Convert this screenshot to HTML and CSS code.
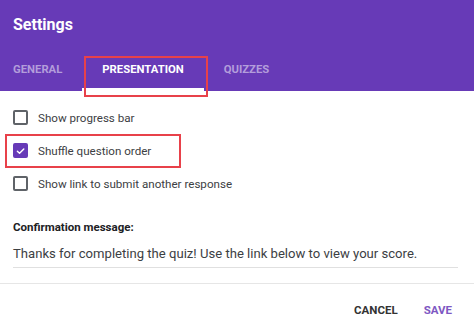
FILE: index.html
```html
<!DOCTYPE html>
<html>
<head>
<meta charset="utf-8">
<link rel="stylesheet" href="styles.css">
</head>
<body>
<div class="dialog">
  <header class="header">
    <h1 class="title">Settings</h1>
    <nav class="tabs">
      <div class="tab">GENERAL</div>
      <div class="tab active">PRESENTATION</div>
      <div class="tab">QUIZZES</div>
    </nav>
    <div class="mark mark-tab"></div>
  </header>
  <section class="options">
    <label class="option"><span class="box"></span><span>Show progress bar</span></label>
    <label class="option"><span class="box checked"><svg viewBox="0 0 14 14" width="14" height="14"><path d="M3 7.2 L5.8 10 L11.2 4.4" fill="none" stroke="#fff" stroke-width="1.8" stroke-linecap="round" stroke-linejoin="round"/></svg></span><span>Shuffle question order</span><span class="mark mark-opt"></span></label>
    <label class="option"><span class="box"></span><span>Show link to submit another response</span></label>
  </section>
  <section class="confirm">
    <div class="confirm-label">Confirmation message:</div>
    <div class="confirm-input">Thanks for completing the quiz! Use the link below to view your score.</div>
  </section>
  <footer class="actions">
    <button class="btn">CANCEL</button>
    <button class="btn primary">SAVE</button>
  </footer>
</div>
</body>
</html>
```

FILE: styles.css
```css
html, body {
  margin: 0;
  padding: 0;
  background: #fff;
}
body {
  font-family: Roboto, "Liberation Sans", sans-serif;
  color: #202124;
  width: 474px;
  height: 335px;
  overflow: hidden;
}
.dialog {
  display: flex;
  flex-direction: column;
}
.header {
  position: relative;
  background: #673ab7;
  height: 91px;
  display: flex;
  flex-direction: column;
  justify-content: space-between;
}
.title {
  margin: 0;
  padding: 15px 0 0 13px;
  font-size: 16px;
  font-weight: 700;
  color: #fff;
  line-height: 20px;
}
.tabs {
  display: flex;
  margin-left: -7px;
}
.tab {
  padding: 0 20px;
  height: 40px;
  line-height: 38px;
  font-size: 11.3px;
  font-weight: 700;
  color: #b39ddb;
  box-sizing: border-box;
  border-bottom: 3px solid transparent;
}
.tab.active {
  color: #fff;
  border-bottom-color: #fff;
}
.mark {
  position: absolute;
  border: 2px solid #e8414a;
  box-sizing: border-box;
  pointer-events: none;
}
.mark-tab {
  left: 84px;
  top: 56px;
  width: 124px;
  height: 41px;
}
.options {
  display: flex;
  flex-direction: column;
  padding: 10px 0 0 13px;
}
.option {
  position: relative;
  display: flex;
  align-items: center;
  gap: 10px;
  height: 33px;
  font-size: 11.6px;
  color: #3c4043;
}
.box {
  width: 15px;
  height: 15px;
  box-sizing: border-box;
  border: 2px solid #5f6368;
  border-radius: 2px;
  display: flex;
  align-items: center;
  justify-content: center;
}
.box.checked {
  background: #673ab7;
  border-color: #673ab7;
}
.box svg {
  display: block;
}
.mark-opt {
  left: -8px;
  top: 0;
  width: 176px;
  height: 34px;
}
.confirm {
  padding: 20px 16px 0 13px;
}
.confirm-label {
  font-size: 11.5px;
  font-weight: 700;
  color: #202124;
  line-height: 14px;
}
.confirm-input {
  margin-top: 11px;
  font-size: 13.1px;
  line-height: 18px;
  color: #3c4043;
  padding-bottom: 4px;
  border-bottom: 1px solid #e0e0e0;
}
.actions {
  margin-top: 15px;
  border-top: 1px solid #e6e6e6;
  display: flex;
  justify-content: flex-end;
  gap: 26px;
  padding: 18px 22px 0 0;
}
.btn {
  background: none;
  border: none;
  padding: 0;
  font-family: Roboto, "Liberation Sans", sans-serif;
  font-size: 11.5px;
  font-weight: 700;
  color: #333;
  line-height: 16px;
}
.btn.primary {
  color: #7e57c2;
}
```
